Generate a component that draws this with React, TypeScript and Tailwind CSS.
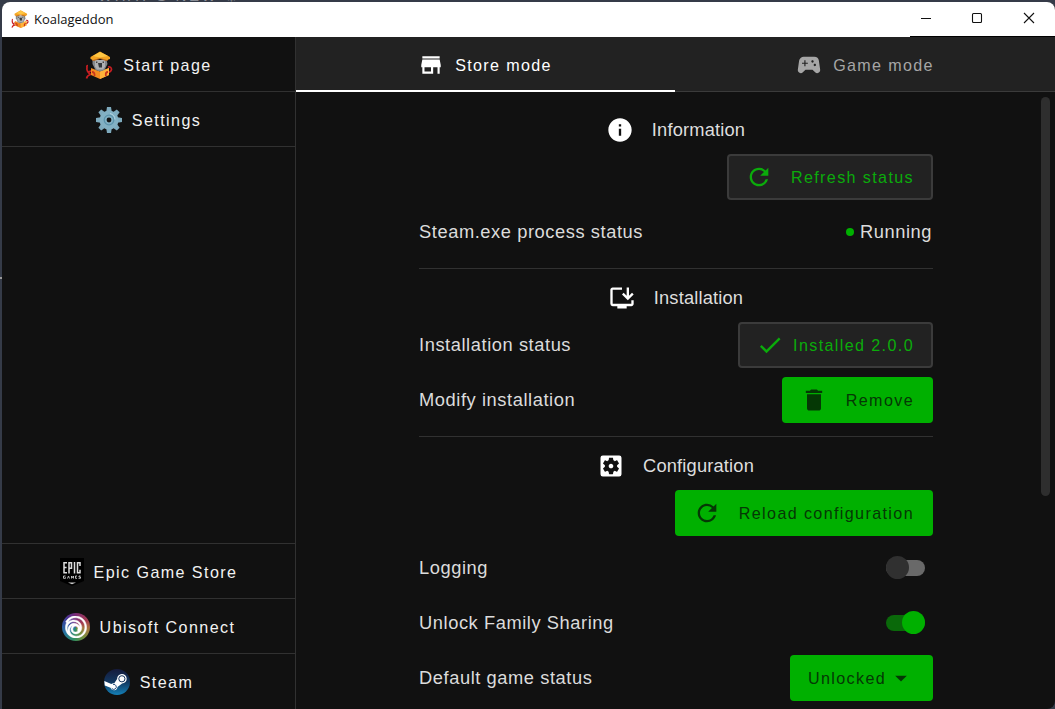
import React from "react";
import {
  MdStore, MdSportsEsports, MdInfo, MdRefresh, MdCheck, MdDelete,
  MdSettingsApplications, MdArrowDropDown, MdInstallDesktop,
} from "react-icons/md";
import { SiUbisoft } from "react-icons/si";

function Koala({ className }: { className: string }) {
  return (
    <svg viewBox="0 0 28 28" className={className}>
      <path d="M1.500 27.500Q2 24.500 5.500 23.500Q1 20 2 16.500Q1.500 14.500 3 14.500M3.500 20.500Q5 21 8 19M21 21.500Q26 21.500 26.500 18.500Q26.500 15.500 23 16" fill="none" stroke="#c81e22" strokeWidth="1.700" />
      <path d="M6 17l9 3.500 9-3.500v7l-9 4-9-4z" fill="#f28b20" />
      <path d="M15 20.500l9-3.500v7l-9 4z" fill="#ffb43a" />
      <path d="M7 21q3 0 2.500 4M23 21q-3 0-2 4" fill="none" stroke="#c9361c" strokeWidth="1.800" />
      <path d="M7.500 9h14l1 4-3 6-4.500 1.500L10.500 19l-3-6z" fill="#85898c" />
      <path d="M10 9h10v6.500l-2 3h-6l-2-3z" fill="#aeb1b2" />
      <path d="M13 12h4v4.500h-3z" fill="#34383b" />
      <path d="M11 10.500h1.400V12H11zm6.600 0H19V12h-1.400z" fill="#444" />
      <path d="M7 7h16v2.500l-2 .5-6-2-6 2-2-.5z" fill="#b96a22" />
      <path d="M5.500 6L15 .5 25 6v2l-3 1-7-2-7 2-2.500-1z" fill="#f4a321" />
      <path d="M8 5l7-4 8 4-8 1.500z" fill="#ffc744" />
    </svg>
  );
}

function Gear() {
  const teeth = [0, 45, 90, 135, 180, 225, 270, 315];
  return (
    <svg viewBox="0 0 26 26" className="h-[26px] w-[26px]">
      {teeth.map((a) => (
        <path key={a} d="M11 0h4l1 6h-6z" fill="#7eaabd" transform={`rotate(${a} 13 13)`} />
      ))}
      <circle cx="13" cy="13" r="9.500" fill="#82b0c3" />
      <circle cx="13" cy="13" r="4.800" fill="none" stroke="#5a92aa" strokeWidth="1.200" />
      <path d="M14 6.500a6.600 6.600 0 0 1 5 6" fill="none" stroke="#b8d7e3" strokeWidth="1" />
      <circle cx="13" cy="13" r="2.400" fill="#111" />
    </svg>
  );
}

function Epic() {
  return (
    <svg viewBox="0 0 24 28" className="h-[28px] w-[24px]">
      <path d="M0 0h24v23l-12 5-12-5z" fill="#000" />
      <path d="M7 4.800H4v10h3M4 9.500h2.600M9 15.500V4.800h2.500v5.400H9M14.500 4v11.500M20 8V4.800h-2.500v10H20v-3" fill="none" stroke="#ddd" strokeWidth="1.500" />
      <path d="M5.500 18H3.500v2.300h2v-1M7.500 20.500l1-2.500 1 2.500M11.500 20.500V18l1 1.500 1-1.500v2.500M17 18h-1.500v2.300H17M20.500 18H19v1h1.500v1.300h-2" fill="none" stroke="#ccc" strokeWidth=".9" />
      <path d="M8 24.500h8l-4 1.800z" fill="#ccc" />
    </svg>
  );
}

function Ubisoft() {
  return (
    <span className="flex h-[28px] w-[28px] items-center justify-center rounded-full bg-[conic-gradient(from_0deg,#7b2c75,#a63c4f_60deg,#a7793f_100deg,#73903e_145deg,#2f8f62_190deg,#2675a0_240deg,#334da0_290deg,#5b2d8c_330deg,#7b2c75)]">
      <SiUbisoft className="h-[22px] w-[22px] stroke-white stroke-[0.5] text-white" />
    </span>
  );
}

function Steam() {
  return (
    <svg viewBox="0 0 26 26" className="h-[26px] w-[26px]">
      <defs>
        <linearGradient id="steam" x1="0" y1="0" x2="0" y2="1">
          <stop offset="0" stopColor="#151a3c" />
          <stop offset=".5" stopColor="#12375f" />
          <stop offset="1" stopColor="#1481b8" />
        </linearGradient>
      </defs>
      <circle cx="13" cy="13" r="13" fill="url(#steam)" />
      <path d="M.3 12l7 3q1.500-.8 2.800-.6l3-4.500a4.800 4.800 0 1 1 5 4.700l-4.600 3.400a3.600 3.600 0 0 1-7 .8L.8 16.600z" fill="#fff" />
      <circle cx="17.900" cy="9.800" r="3.100" fill="none" stroke="#12305a" strokeWidth="1" />
      <path d="M7.800 19.400a2.500 2.500 0 1 0 1.300-3.900" fill="none" stroke="#14406e" strokeWidth=".9" />
    </svg>
  );
}

function NavItem({ icon, label, edge }: { icon: React.ReactNode; label: string; edge: string }) {
  return (
    <div className={`flex h-[55px] items-center justify-center gap-[10px] border-[#313131] pt-[2px] text-[16.1px] tracking-[1.42px] text-[#f2f2f2] ${edge}`}>
      {icon}
      <span className="whitespace-nowrap">{label}</span>
    </div>
  );
}

function Heading({ icon, label }: { icon: React.ReactNode; label: string }) {
  return (
    <div className="flex h-[38px] items-center justify-center gap-[18px] pr-px text-[18.3px] tracking-[0.17px] text-[#dedede]">
      <span className="text-white">{icon}</span>
      {label}
    </div>
  );
}

function Row({ label, children }: { label?: string; children: React.ReactNode }) {
  return (
    <div className="flex h-[55px] items-start justify-between pt-1 text-[18.3px] tracking-[0.57px] text-[#dcdcdc]">
      <span className="flex h-[46px] items-center">{label}</span>
      <span className="flex h-[46px] items-center">{children}</span>
    </div>
  );
}

const btn = "flex h-[46px] items-center justify-between rounded-[4px] text-[16.1px] tracking-[1.38px] whitespace-nowrap";
const outlined = `${btn} border-2 border-[#3b3b3b] bg-[#222222] text-[#0bab0b]`;
const filled = `${btn} bg-[#00b000] text-[#053805]`;

export default function App() {
  return (
    <div className="relative h-[709px] w-[1055px] overflow-hidden bg-[#353b48] pt-[2px] pl-[2px] font-['Liberation_Sans',sans-serif] text-base">
      <div className="flex h-[707px] w-full flex-col overflow-hidden rounded-t-[8px] rounded-br-[8px] bg-[#111111]">
        <header className="relative flex h-[35px] shrink-0 items-center bg-white pl-[9px]">
          <Koala className="mb-[2px] h-[18px] w-[18px]" />
          <span className="ml-[5px] font-['Open_Sans',sans-serif] text-[13px] text-[#111]">Koalageddon</span>
          <svg viewBox="0 0 120 12" className="mr-[20px] mb-[3px] ml-auto h-[12px] w-[120px]" fill="none" stroke="#111" strokeWidth="1.1">
            <path d="M6 6.500H16M109 1l10 10m0-10l-10 10" />
            <rect x="57.500" y="1.500" width="9" height="9" rx="1" />
          </svg>
          <div className="absolute right-0 bottom-0 h-px w-[145px] bg-black" />
        </header>
        <div className="flex min-h-0 flex-1">
          <nav className="flex w-[294px] shrink-0 flex-col justify-between border-r border-[#313131]">
            <div>
              <NavItem edge="border-b" icon={<Koala className="h-[28px] w-[28px]" />} label="Start page" />
              <NavItem edge="border-b" icon={<Gear />} label="Settings" />
            </div>
            <div className="pb-px">
              <NavItem edge="border-t" icon={<Epic />} label="Epic Game Store" />
              <NavItem edge="border-t" icon={<Ubisoft />} label="Ubisoft Connect" />
              <NavItem edge="border-t" icon={<Steam />} label="Steam" />
            </div>
          </nav>
          <main className="flex min-w-0 flex-1 flex-col">
            <div className="flex h-[55px] shrink-0 border-b border-[#3b3b3b] bg-[#222222] text-[16.1px] tracking-[1.35px]">
              <div className="flex h-[55px] w-[379px] items-center justify-center gap-[11px] border-b-2 border-white pt-[2px] pr-px text-white">
                <MdStore className="h-[26px] w-[26px]" />
                <span className="pt-[2px]">Store mode</span>
              </div>
              <div className="flex h-[55px] flex-1 items-center justify-center gap-[10px] pt-px pr-px text-[#a6a6a6]">
                <MdSportsEsports className="h-[28px] w-[28px]" />
                <span>Game mode</span>
              </div>
            </div>
            <div className="flex min-h-0 flex-1 justify-between">
              <div className="ml-[123px] w-[514px] pt-[19px]">
                <section className="h-[168px]">
                  <Heading icon={<MdInfo className="h-[28px] w-[28px]" />} label="Information" />
                  <div className="pt-px">
                    <Row>
                      <button className={`${outlined} w-[206px] pr-[17px] pl-[16px]`}><MdRefresh className="h-[28px] w-[28px]" /><span className="pt-px">Refresh status</span></button>
                    </Row>
                    <Row label="Steam.exe process status"><i className="mr-[6px] h-[8px] w-[8px] rounded-full bg-[#00b000]" /><span className="pr-px">Running</span></Row>
                  </div>
                  <div className="mt-[8px] h-px bg-[#313131]" />
                </section>
                <section className="h-[168px]">
                  <Heading icon={<MdInstallDesktop className="h-[28px] w-[28px]" />} label="Installation" />
                  <div className="pt-px">
                    <Row label="Installation status">
                      <button className={`${outlined} w-[195px] pr-[17px] pl-[16px]`}><MdCheck className="h-[28px] w-[28px]" /><span className="pt-px">Installed 2.0.0</span></button>
                    </Row>
                    <Row label="Modify installation">
                      <button className={`${filled} w-[151px] pr-[19px] pl-[18px]`}><MdDelete className="h-[28px] w-[28px]" /><span className="pt-px">Remove</span></button>
                    </Row>
                  </div>
                  <div className="mt-[8px] h-px bg-[#313131]" />
                </section>
                <section>
                  <Heading icon={<MdSettingsApplications className="h-[28px] w-[28px]" />} label="Configuration" />
                  <div className="pt-px">
                    <Row>
                      <button className={`${filled} w-[258px] pr-[19px] pl-[18px]`}><MdRefresh className="h-[28px] w-[28px]" /><span className="pt-px">Reload configuration</span></button>
                    </Row>
                    <Row label="Logging">
                      <span className="mr-[8px] mb-px flex h-[16px] w-[39px] items-center rounded-full bg-[#696969]"><i className="h-[23px] w-[23px] rounded-full bg-[#303030]" /></span>
                    </Row>
                    <Row label="Unlock Family Sharing">
                      <span className="mr-[8px] mb-px flex h-[16px] w-[39px] items-center justify-end rounded-full bg-[#0a690a]"><i className="h-[23px] w-[23px] rounded-full bg-[#00b000]" /></span>
                    </Row>
                    <Row label="Default game status">
                      <button className={`${filled} w-[143px] pr-[18px] pl-[18px]`}><span className="pt-px">Unlocked</span><MdArrowDropDown className="h-[28px] w-[28px]" /></button>
                    </Row>
                  </div>
                </section>
              </div>
              <div className="mt-[5px] mr-[5px] h-[399px] w-[9px] rounded-full bg-[#2e2e2e]" />
            </div>
          </main>
        </div>
      </div>
      <div className="absolute top-0 left-[98px] h-[2px] w-[142px] overflow-hidden">
        <span className="absolute bottom-0 left-0 text-[15px] leading-[12px] tracking-[2.5px] whitespace-nowrap text-[#8b8e96]">WHAT'S NEW ☼</span>
      </div>
      <div className="absolute top-[277px] left-0 h-[2px] w-[2px] bg-[#9a9a9a]" />
    </div>
  );
}
